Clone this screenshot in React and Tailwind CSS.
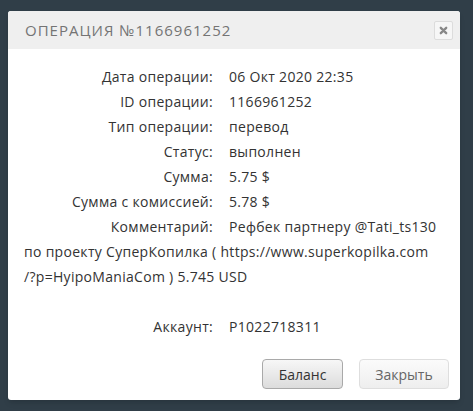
import React from "react"

const rows = [
  ["Дата операции:", "06 Окт 2020 22:35"],
  ["ID операции:", "1166961252"],
  ["Тип операции:", "перевод"],
  ["Статус:", "выполнен"],
  ["Сумма:", "5.75 $"],
  ["Сумма с комиссией:", "5.78 $"],
]

function App() {
  return (
    <div
      className="w-[473px] h-[411px] bg-[#303e48] pt-[11px] pl-[8px]"
      style={{ fontFamily: '"Open Sans", "Liberation Sans", sans-serif' }}
    >
      <div className="w-[452px] h-[389px] bg-white rounded-[3px] overflow-hidden shadow-md flex flex-col">
        {/* Header */}
        <div className="h-[38px] bg-[#efefef] flex items-center justify-between pl-[17px] pr-[7px]">
          <h3 className="text-[15px] tracking-[1px] text-[#747474] uppercase">Операция №1166961252</h3>
          <button className="w-[19px] h-[19px] border border-[#dcdcdc] rounded-[2px] bg-[#f6f6f6] flex items-center justify-center text-[#888]">
            <svg width="9" height="9" viewBox="0 0 10 10">
              <path d="M2 2L8 8M8 2L2 8" stroke="currentColor" strokeWidth="2.6" strokeLinecap="round" />
            </svg>
          </button>
        </div>

        {/* Body */}
        <div className="px-[16px] pt-[15px] text-[14px] leading-[25px] tracking-[0.3px] text-[#333]">
          {rows.map(([label, value]) => (
            <div key={label} className="flex">
              <span className="w-[189px] text-right shrink-0">{label}</span>
              <span className="ml-[16px]">{value}</span>
            </div>
          ))}
          <p>
            <span className="inline-block w-[189px] text-right mr-[16px]">Комментарий:</span>
            Рефбек партнеру @Tati_ts130 по проекту СуперКопилка ( https://www.superkopilka.com
            <br />
            /?p=HyipoManiaCom ) 5.745 USD
          </p>
          <div className="h-[25px]" />
          <div className="flex">
            <span className="w-[189px] text-right shrink-0">Аккаунт:</span>
            <span className="ml-[16px]">P1022718311</span>
          </div>
        </div>

        {/* Footer */}
        <div className="flex justify-end gap-[16px] pr-[11px] pt-[20px]">
          <button className="w-[81px] h-[30px] rounded-[4px] border border-[#a9a9a9] bg-gradient-to-b from-[#f7f7f7] to-[#dcdcdc] text-[14px] text-[#333]">
            Баланс
          </button>
          <button className="w-[90px] h-[30px] rounded-[4px] border border-[#dedede] bg-gradient-to-b from-[#fbfbfb] to-[#eeeeee] text-[14px] text-[#666]">
            Закрыть
          </button>
        </div>
      </div>
    </div>
  )
}

export default App
